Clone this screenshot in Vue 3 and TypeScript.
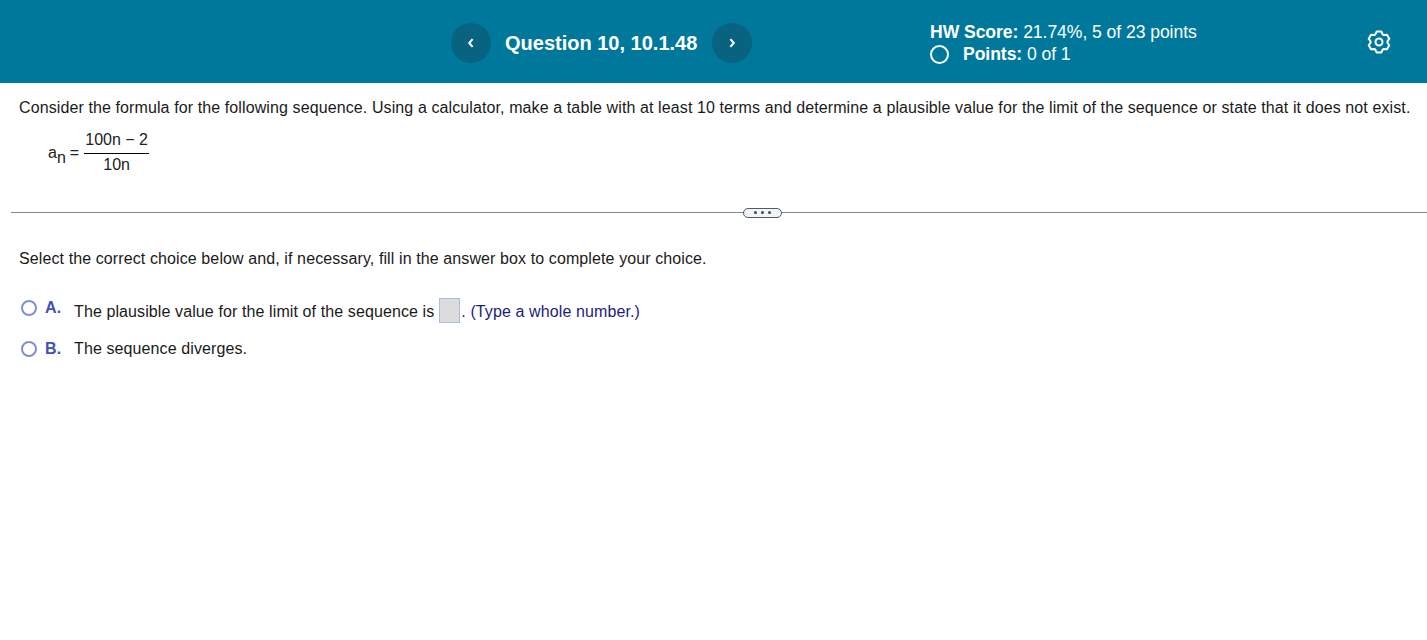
<script setup lang="ts">
const intro = 'Consider the formula for the following sequence. Using a calculator, make a table with at least 10 terms and determine a plausible value for the limit of the sequence or state that it does not exist.'

const gearPath = (() => {
  const pts: string[] = []
  const polar = (deg: number, r: number) => {
    const t = (deg * Math.PI) / 180
    return `${(12 + r * Math.cos(t)).toFixed(2)} ${(12 + r * Math.sin(t)).toFixed(2)}`
  }
  for (let i = 0; i < 6; i++) {
    const a = -90 + 60 * i
    pts.push(polar(a - 27, 8.4), polar(a - 12, 10.8), polar(a + 12, 10.8), polar(a + 27, 8.4))
  }
  return 'M' + pts.join('L') + 'Z'
})()
</script>

<template>
  <div class="page">
    <header class="top">
      <div class="nav">
        <button class="circle" type="button" aria-label="Previous">
          <svg width="8" height="10" viewBox="0 0 8 10"><path d="M5.6 1.2 2.2 5l3.4 3.8" fill="none" stroke="#fff" stroke-width="2" /></svg>
        </button>
        <span class="qtitle">Question 10, 10.1.48</span>
        <button class="circle" type="button" aria-label="Next">
          <svg width="8" height="10" viewBox="0 0 8 10"><path d="M2.4 1.2 5.8 5 2.4 8.8" fill="none" stroke="#fff" stroke-width="2" /></svg>
        </button>
      </div>
      <div class="score">
        <div class="score-line"><b>HW Score:</b> 21.74%, 5 of 23 points</div>
        <div class="points-line">
          <span class="ring"></span>
          <span><b>Points:</b> 0 of 1</span>
        </div>
      </div>
      <svg class="gear" width="24" height="24" viewBox="0 0 24 24" fill="none" stroke="#fff" stroke-width="2" stroke-linejoin="round">
        <path :d="gearPath" />
        <circle cx="12" cy="12" r="3.5" />
      </svg>
    </header>

    <main class="body">
      <p class="intro">{{ intro }}</p>
      <div class="formula">
        <span class="lhs">a<sub>n</sub></span>
        <span class="eq">=</span>
        <span class="frac">
          <span class="num">100n − 2</span>
          <span class="den">10n</span>
        </span>
      </div>

      <div class="divider">
        <span class="pill"><i></i><i></i><i></i></span>
      </div>

      <p class="select">Select the correct choice below and, if necessary, fill in the answer box to complete your choice.</p>

      <div class="choice first">
        <span class="radio"></span>
        <span class="letter">A.</span>
        <span class="text">The plausible value for the limit of the sequence is</span>
        <span class="box"></span>
        <span class="hint">. (Type a whole number.)</span>
      </div>
      <div class="choice">
        <span class="radio"></span>
        <span class="letter">B.</span>
        <span class="text">The sequence diverges.</span>
      </div>
    </main>
  </div>
</template>

<style>
html, body { margin: 0; background: #fff; }
</style>

<style scoped>
.page {
  font-family: "Liberation Sans", Arial, sans-serif;
  font-size: 16px;
  color: #1a1a1a;
  height: 640px;
  overflow: hidden;
}
.top {
  height: 83px;
  background: #00789c;
  color: #fff;
  display: flex;
  align-items: center;
  box-sizing: border-box;
  padding: 2px 0 0 451px;
}
.nav {
  display: flex;
  align-items: center;
  width: 479px;
}
.circle {
  width: 40px;
  height: 40px;
  border-radius: 50%;
  border: 0;
  padding: 0;
  background: #086381;
  display: flex;
  align-items: center;
  justify-content: center;
  flex: none;
}
.qtitle {
  font-size: 20px;
  font-weight: 700;
  margin: 2px 15px 0 14px;
  white-space: nowrap;
}
.score {
  font-size: 17.6px;
  line-height: 22px;
  width: 437px;
  white-space: nowrap;
  letter-spacing: -0.07px;
}
.points-line {
  display: flex;
  align-items: center;
  gap: 14px;
}
.ring {
  width: 15px;
  height: 15px;
  border: 2.5px solid #fff;
  border-radius: 50%;
  box-sizing: content-box;
  flex: none;
  margin-top: 2px;
}
.gear { flex: none; margin-top: -2px; }
.body {
  padding-left: 19px;
  letter-spacing: 0.105px;
}
.intro {
  margin: 0;
  padding-top: 15px;
  line-height: 19px;
  white-space: nowrap;
}
.formula {
  display: flex;
  align-items: flex-start;
  margin: 12px 0 0 29px;
  height: 45px;
  color: #222;
  letter-spacing: 0;
}
.lhs { line-height: 18px; margin: 15px 4px 0 0; }
.lhs sub { font-size: 16px; line-height: 0; vertical-align: -5px; }
.eq { margin: 15px 5px 0 0; line-height: 18px; }
.frac {
  display: flex;
  flex-direction: column;
  align-items: center;
  width: 65px;
}
.num { line-height: 22px; border-bottom: 1px solid #000; width: 100%; text-align: center; padding-bottom: 2px; }
.den { line-height: 22px; }
.divider {
  margin: 38px 0 0 -8px;
  height: 1px;
  background: #7e8a98;
  display: flex;
  justify-content: center;
  align-items: center;
}
.pill {
  width: 37px;
  height: 8px;
  border: 1px solid #4f5e6d;
  border-radius: 5px;
  background: #f2f4f7;
  display: flex;
  align-items: center;
  justify-content: center;
  gap: 4px;
  margin-left: 86px;
}
.pill i {
  width: 3px;
  height: 3px;
  border-radius: 50%;
  background: #3f4a56;
}
.select {
  margin: 36px 0 0;
  line-height: 19px;
}
.choice {
  display: flex;
  align-items: center;
  height: 26px;
  margin-top: 11px;
  white-space: nowrap;
}
.choice.first { margin-top: 31px; }
.radio {
  width: 12px;
  height: 12px;
  border: 2px solid #7f90d6;
  border-radius: 50%;
  margin: 0 0 0 2px;
  box-sizing: content-box;
  flex: none;
}
.first .radio { margin-top: -8px; }
.letter {
  color: #3f51c0;
  font-weight: 700;
  margin: 0 0 0 8px;
  width: 29px;
}
.first .letter { margin-top: -8px; }
.text { color: #1a1a1a; }
.box {
  width: 19px;
  height: 23px;
  background: #dcdcdc;
  border: 1px solid #a6bde6;
  margin: -3px 0 0 5px;
  flex: none;
}
.hint { color: #1c1c7a; margin-left: 1px; }
</style>
